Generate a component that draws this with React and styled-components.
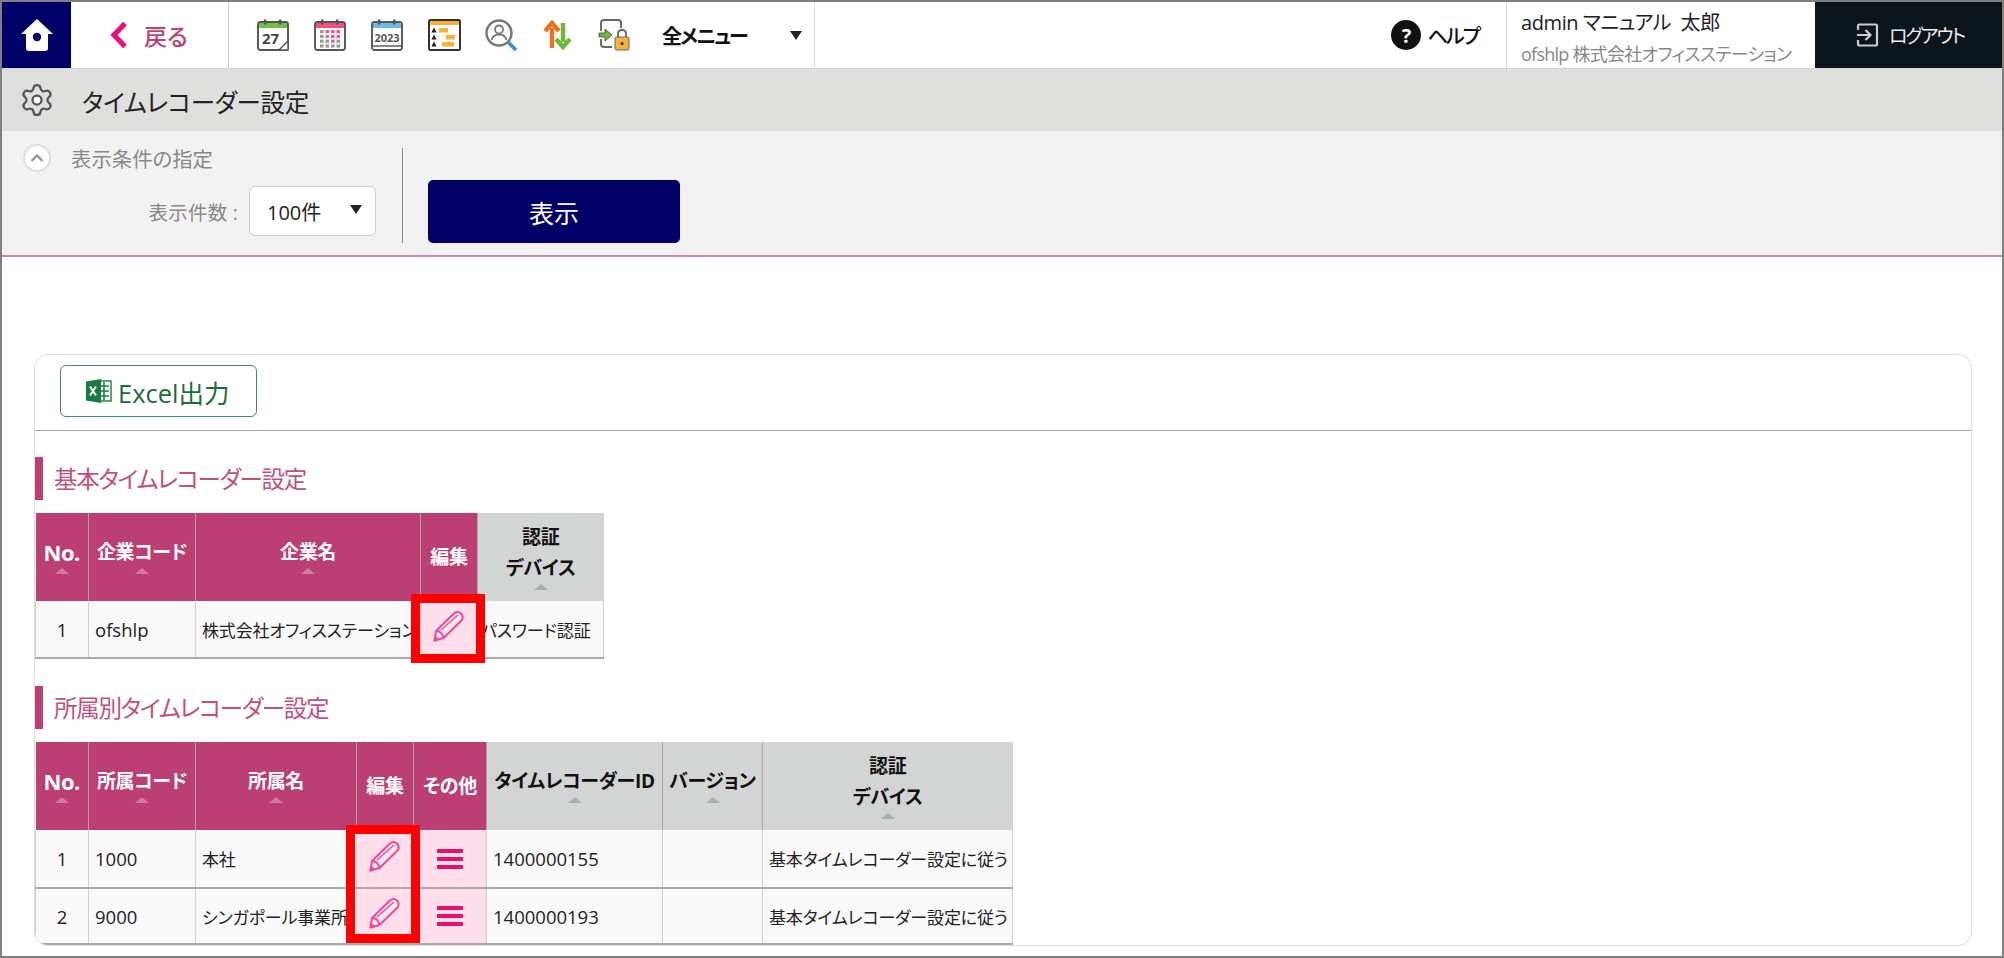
import styled, { createGlobalStyle } from 'styled-components';
import { Settings } from 'lucide-react';

const GlobalStyle = createGlobalStyle`
  html, body {
    margin: 0;
    padding: 0;
    background: #fff;
  }
  body {
    font-family: "Open Sans", "Noto Sans CJK JP", sans-serif;
    font-feature-settings: "palt";
    color: #222;
  }
`;

const Frame = styled.div`
  box-sizing: border-box;
  width: 2004px;
  height: 958px;
  border: 2px solid #808080;
  overflow: hidden;
  background: #fff;
`;

const Nav = styled.header`
  display: flex;
  align-items: stretch;
  height: 66px;
  background: #fff;
`;

const HomeButton = styled.a`
  display: flex;
  align-items: center;
  justify-content: center;
  width: 69px;
  background: #000066;
`;

const BackButton = styled.a`
  display: flex;
  align-items: center;
  gap: 15px;
  width: 158px;
  padding-left: 38px;
  box-sizing: border-box;
  border-right: 1px solid #cfcfcf;
  color: #c0406f;
  font-size: 23px;
  font-weight: 500;
`;

const IconMenu = styled.div`
  display: flex;
  align-items: center;
  gap: 24px;
  padding-left: 28px;
  width: 586px;
  box-sizing: border-box;
  border-right: 1px solid #dcdcdc;
`;

const MenuLabel = styled.span`
  margin-left: 8px;
  font-size: 20px;
  font-weight: 700;
  letter-spacing: -1.8px;
  color: #111;
  white-space: nowrap;
`;

const MenuArrow = styled.span`
  margin-left: 19px;
  width: 0;
  height: 0;
  border-left: 6px solid transparent;
  border-right: 6px solid transparent;
  border-top: 9px solid #222;
`;

const NavRight = styled.div`
  display: flex;
  align-items: stretch;
  margin-left: auto;
`;

const HelpLink = styled.a`
  display: flex;
  align-items: center;
  gap: 7px;
  padding-right: 27px;
  font-size: 20px;
  font-weight: 500;
  letter-spacing: -2px;
  color: #111;
`;

const HelpDot = styled.span`
  display: flex;
  align-items: center;
  justify-content: center;
  width: 30px;
  height: 30px;
  border-radius: 50%;
  background: #111;
  color: #fff;
  font-size: 20px;
  font-weight: 700;
`;

const UserBox = styled.div`
  display: flex;
  flex-direction: column;
  justify-content: space-between;
  width: 309px;
  padding: 8px 0 2px 14px;
  box-sizing: border-box;
  border-left: 1px solid #d8d8d8;
  white-space: nowrap;
`;

const UserName = styled.span`
  font-size: 20px;
  line-height: 26px;
  letter-spacing: -0.4px;
  color: #222;
`;

const UserCompany = styled.span`
  font-size: 18px;
  line-height: 24px;
  letter-spacing: -0.75px;
  color: #888;
`;

const LogoutButton = styled.a`
  display: flex;
  align-items: center;
  gap: 10px;
  width: 187px;
  padding-left: 41px;
  box-sizing: border-box;
  background: #0c141c;
  color: #eee;
  font-size: 19px;
  letter-spacing: -2px;
  white-space: nowrap;
`;

const TitleBar = styled.div`
  display: flex;
  align-items: center;
  gap: 27px;
  height: 63px;
  padding-left: 17px;
  background: #dfdfdd;
  border-top: 1px solid #d6d6d6;
  box-sizing: border-box;
  svg circle {
    fill: #fff;
  }
`;

const PageTitle = styled.h1`
  margin: 3px 0 0;
  font-size: 24.5px;
  font-weight: 400;
  letter-spacing: -0.3px;
  color: #222;
`;

const FilterBar = styled.section`
  display: flex;
  box-sizing: border-box;
  height: 126px;
  background: #f2f2f2;
  border-bottom: 2px solid #cf86a5;
`;

const FilterLeft = styled.div`
  display: flex;
  flex-direction: column;
  width: 400px;
  padding: 14px 0 0 21px;
  box-sizing: border-box;
`;

const CollapseHead = styled.div`
  display: flex;
  align-items: center;
  gap: 20px;
  height: 26px;
  font-size: 20.4px;
  color: #888;
`;

const CollapseButton = styled.span`
  display: flex;
  align-items: center;
  justify-content: center;
  width: 28px;
  height: 28px;
  box-sizing: border-box;
  border-radius: 50%;
  background: #fff;
  border: 2px solid #ddd;
`;

const CountRow = styled.div`
  display: flex;
  align-items: center;
  justify-content: flex-end;
  gap: 11px;
  margin-top: 15px;
  padding-right: 26px;
`;

const CountLabel = styled.span`
  font-size: 19.5px;
  letter-spacing: 0.2px;
  color: #888;
`;

const SelectBox = styled.div`
  display: flex;
  align-items: center;
  justify-content: space-between;
  width: 127px;
  height: 50px;
  box-sizing: border-box;
  padding: 0 13px 0 17px;
  background: #fff;
  border: 1px solid #ccc;
  border-radius: 6px;
  font-size: 20px;
  color: #222;
`;

const SelectArrow = styled.span`
  width: 0;
  height: 0;
  margin-bottom: 3px;
  border-left: 6px solid transparent;
  border-right: 6px solid transparent;
  border-top: 9px solid #222;
`;

const FilterRight = styled.div`
  display: flex;
  align-items: flex-end;
  height: 95px;
  margin-top: 17px;
  padding-left: 25px;
  border-left: 1px solid #888;
`;

const ShowButton = styled.button`
  width: 252px;
  height: 63px;
  border: 0;
  border-radius: 5px;
  background: #000066;
  color: #fff;
  font-family: inherit;
  font-feature-settings: inherit;
  font-size: 25px;
`;

const Card = styled.main`
  position: relative;
  box-sizing: border-box;
  height: 592px;
  margin: 97px 30px 0 32px;
  border: 1px solid #ddd;
  border-radius: 14px;
  overflow: hidden;
`;

const CardHead = styled.div`
  box-sizing: border-box;
  height: 76px;
  padding: 10px 0 0 25px;
  border-bottom: 1px solid #aaa;
`;

const ExcelButton = styled.button`
  display: inline-flex;
  align-items: center;
  gap: 6px;
  width: 197px;
  height: 52px;
  box-sizing: border-box;
  padding: 0 0 0 25px;
  background: #fff;
  border: 1.5px solid #3d8f63;
  border-radius: 6px;
  color: #1c6b3c;
  font-family: inherit;
  font-feature-settings: inherit;
  font-size: 25.5px;
`;

const SectionTitle = styled.h2`
  display: flex;
  align-items: center;
  box-sizing: border-box;
  height: 43px;
  margin: ${(p) => p.$top}px 0 ${(p) => p.$bottom}px;
  padding: 0 0 2px 11px;
  border-left: 8px solid #bb3f72;
  font-size: 23.5px;
  font-weight: 400;
  letter-spacing: -1.3px;
  color: #c0507c;
`;

const TableWrap = styled.div`
  position: relative;
  width: ${(p) => p.$width}px;
`;

const Table = styled.table`
  width: 100%;
  table-layout: fixed;
  border-collapse: collapse;
`;

const HeadCell = styled.th`
  box-sizing: border-box;
  width: ${(p) => p.$width}px;
  height: 88px;
  padding: 0;
  background: ${(p) => (p.$dark ? '#d3d5d5' : '#bb3f72')};
  color: ${(p) => (p.$dark ? '#111' : '#fff')};
  border-left: 1px solid #b0a3a8;
  font-size: 19px;
  font-weight: 700;
  line-height: 31px;
  vertical-align: middle;
  text-align: center;
  white-space: nowrap;
  &:first-child {
    border-left: 0;
  }
`;

const HeadLine = styled.div`
  font-size: ${(p) => (p.$large ? 22 : 19)}px;
  letter-spacing: ${(p) => (p.$large ? -0.5 : -0.3)}px;
`;

const SortMark = styled.span`
  display: block;
  width: 0;
  height: 0;
  margin: 0 auto 3px;
  border-left: 7px solid transparent;
  border-right: 7px solid transparent;
  border-bottom: 6px solid ${(p) => (p.$dark ? '#a9acb0' : '#d27b9f')};
`;

const Row = styled.tr`
  height: ${(p) => p.$height}px;
  border-bottom: 2px solid #aaa;
`;

const Cell = styled.td`
  box-sizing: border-box;
  padding: 0 ${(p) => (p.$tight ? 3 : 6)}px;
  background: #f9f9f9;
  border-left: 1px solid #d0d0d0;
  border-right: 1px solid #d0d0d0;
  font-size: ${(p) => (p.$latin ? 18.5 : 17)}px;
  letter-spacing: ${(p) => (p.$latin ? 0 : -0.15)}px;
  color: #222;
  text-align: ${(p) => (p.$center ? 'center' : 'left')};
  white-space: nowrap;
  overflow: hidden;
`;

const ActionCell = styled.td`
  box-sizing: border-box;
  padding: 0 0 ${(p) => p.$lift || 0}px;
  background: #fddfec;
  border-left: 1px solid #d0d0d0;
  text-align: center;
  line-height: 0;
`;

const Highlight = styled.div`
  position: absolute;
  left: ${(p) => p.$left}px;
  top: ${(p) => p.$top}px;
  width: ${(p) => p.$width}px;
  height: ${(p) => p.$height}px;
  box-sizing: border-box;
  border: 9px solid #ff0000;
  pointer-events: none;
`;

const HomeIcon = () => (
  <svg width="34" height="34" viewBox="0 0 34 34">
    <path d="M17 1 L33 16 L28 16 L28 30 Q28 33 25 33 L9 33 Q6 33 6 30 L6 16 L1 16 Z" fill="#fff" />
    <circle cx="17" cy="19" r="4.2" fill="#000066" />
  </svg>
);

const BackIcon = () => (
  <svg width="20" height="28" viewBox="0 0 20 28">
    <path d="M16 2.5 L5 14 L16 25.5" fill="none" stroke="#e6107a" strokeWidth="5.2" />
  </svg>
);

const CalendarBase = ({ band, children }) => (
  <svg width="33" height="32" viewBox="0 0 33 32">
    <rect x="1" y="3" width="30" height="28" rx="2.5" fill="#fff" stroke="#555" strokeWidth="1.9" />
    <path d={`M2 4 H30 V9 H2 Z`} fill={band} />
    <rect x="7" y="0.5" width="2.4" height="5" fill="#555" />
    <rect x="22" y="0.5" width="2.4" height="5" fill="#555" />
    {children}
  </svg>
);

const DayIcon = () => (
  <CalendarBase band="#6cc24a">
    <text x="5" y="25" fontSize="15" fontWeight="700" fontFamily="Open Sans" fill="#444">27</text>
    <path d="M22 31 L31 22 L31 31 Z" fill="#fff" stroke="#555" strokeWidth="1.4" />
  </CalendarBase>
);

const MonthIcon = () => {
  const dots = [];
  for (let r = 0; r < 4; r++) {
    for (let c = 0; c < 4; c++) {
      const pink = (r === 0 && c > 0) || (r === 1 && c > 1) || (r === 2 && c === 2);
      dots.push(<rect key={`${r}-${c}`} x={6 + c * 5.5} y={11 + r * 4.8} width="3.6" height="3.2" fill={pink ? '#ef5c83' : '#999'} />);
    }
  }
  return <CalendarBase band="#f0517c">{dots}</CalendarBase>;
};

const YearIcon = () => (
  <CalendarBase band="#6cb8e8">
    <text x="16" y="23" textAnchor="middle" fontSize="11" fontWeight="700" fontFamily="Open Sans" fill="#555">2023</text>
    <path d="M2 27 H30" stroke="#555" strokeWidth="1.4" />
  </CalendarBase>
);

const GanttIcon = () => (
  <svg width="33" height="32" viewBox="0 0 33 32">
    <rect x="1" y="1" width="31" height="30" rx="1.5" fill="#fff" stroke="#333" strokeWidth="2" />
    <rect x="2" y="2" width="29" height="4" fill="#f8b133" />
    <path d="M6 8.5 l2.6 5 h-5.2 Z M6 15.5 l2.6 5 h-5.2 Z M6 22.5 l2.6 5 h-5.2 Z" fill="#222" />
    <rect x="11" y="9" width="9" height="4.5" fill="#f8b133" />
    <rect x="18" y="16" width="9" height="4.5" fill="#f8b133" />
    <rect x="14" y="23" width="12" height="4.5" fill="#f8b133" />
  </svg>
);

const PersonSearchIcon = () => (
  <svg width="33" height="33" viewBox="0 0 33 33">
    <circle cx="14" cy="14" r="12.5" fill="#fff" stroke="#777" strokeWidth="2.4" />
    <circle cx="14" cy="10.5" r="4" fill="none" stroke="#777" strokeWidth="1.8" />
    <path d="M6.5 21 Q8 15.5 14 15.5 Q20 15.5 21.5 21" fill="none" stroke="#777" strokeWidth="1.8" />
    <path d="M23 23 L31 31" stroke="#4a90b8" strokeWidth="3.8" />
  </svg>
);

const SwapIcon = () => (
  <svg width="32" height="30" viewBox="0 0 32 30">
    <path d="M10 28 V8 M3 11 L10 3 L17 11" fill="none" stroke="#f07020" strokeWidth="4.4" />
    <path d="M21 3 V22 M14 19 L21 27 L28 19" fill="none" stroke="#6cb93a" strokeWidth="4.4" />
  </svg>
);

const LockIcon = () => (
  <svg width="32" height="32" viewBox="0 0 32 32">
    <path d="M3 12 V4 Q3 1 6 1 H20 Q23 1 23 4 V9 M3 20 V25 Q3 28 6 28 H14" fill="none" stroke="#666" strokeWidth="1.9" />
    <path d="M1 14 H7 V10 L14 16 L7 22 V18 H1 Z" fill="#6cb93a" stroke="#444" strokeWidth="0.8" />
    <path d="M20 19 V15 Q20 11 24 11 Q28 11 28 15 V19" fill="none" stroke="#666" strokeWidth="1.8" />
    <rect x="17" y="18" width="14" height="13" rx="1.5" fill="#f2b33d" stroke="#666" />
    <circle cx="24" cy="24.5" r="1.6" fill="#333" />
  </svg>
);

const LogoutIcon = () => (
  <svg width="23" height="24" viewBox="0 0 23 24" fill="none" stroke="#ccc" strokeWidth="2.2">
    <path d="M2 7 V3 Q2 1.5 3.5 1.5 H19.5 Q21 1.5 21 3 V21 Q21 22.5 19.5 22.5 H3.5 Q2 22.5 2 21 V17" />
    <path d="M1 12 H14 M9.5 7 L14.5 12 L9.5 17" />
  </svg>
);

const ExcelIcon = () => (
  <svg width="26" height="26" viewBox="0 0 26 26">
    <rect x="11" y="3" width="14" height="20" fill="#fff" stroke="#1c7a45" strokeWidth="1.4" />
    <path d="M14 8 H23 M14 13 H23 M14 18 H23 M18 4 V22" stroke="#1c7a45" strokeWidth="1.6" />
    <path d="M0 3.5 L15 1 V25 L0 22.5 Z" fill="#1c7a45" />
    <path d="M4 8.5 L10 17.5 M10 8.5 L4 17.5" stroke="#fff" strokeWidth="2" />
  </svg>
);

const PencilIcon = () => (
  <svg width="32" height="32" viewBox="0 0 32 32" fill="none" stroke="#f0479a" strokeWidth="2" strokeLinejoin="round">
    <path d="M3 21 L21 3.5 Q24.5 0.5 28 3.5 Q31 7 28.5 10.5 L10.5 28 L1.5 30.5 Z" fill="#fee9f2" />
    <path d="M3 21 Q9 21 10.5 28" />
    <path d="M8 20 L25 5" stroke="#f0479a" strokeWidth="1.4" />
    <path d="M2.2 27 L1.5 30.5 L5 29.6 Z" fill="#f0479a" />
  </svg>
);

const BarsIcon = () => (
  <svg width="26" height="24" viewBox="0 0 26 24" fill="#e8106f">
    <rect x="0" y="2" width="26" height="4" />
    <rect x="0" y="10" width="26" height="4" />
    <rect x="0" y="18" width="26" height="4" />
  </svg>
);

const Head = ({ width, dark, sort = true, large, lines }) => (
  <HeadCell $width={width} $dark={dark}>
    {lines.map((line) => (
      <HeadLine key={line} $large={large}>{line}</HeadLine>
    ))}
    {sort && <SortMark $dark={dark} />}
  </HeadCell>
);

const branches = [
  { no: 1, code: '1000', name: '本社', id: '1400000155', height: 58 },
  { no: 2, code: '9000', name: 'シンガポール事業所', id: '1400000193', height: 56 },
];

export default function App() {
  return (
    <>
      <GlobalStyle />
      <Frame>
        <Nav>
          <HomeButton>
            <HomeIcon />
          </HomeButton>
          <BackButton>
            <BackIcon />
            戻る
          </BackButton>
          <IconMenu>
            <DayIcon />
            <MonthIcon />
            <YearIcon />
            <GanttIcon />
            <PersonSearchIcon />
            <SwapIcon />
            <LockIcon />
            <MenuLabel>全メニュー</MenuLabel>
            <MenuArrow />
          </IconMenu>
          <NavRight>
            <HelpLink>
              <HelpDot>?</HelpDot>
              ヘルプ
            </HelpLink>
            <UserBox>
              <UserName>admin マニュアル&nbsp;&nbsp;太郎</UserName>
              <UserCompany>ofshlp 株式会社オフィスステーション</UserCompany>
            </UserBox>
            <LogoutButton>
              <LogoutIcon />
              ログアウト
            </LogoutButton>
          </NavRight>
        </Nav>
        <TitleBar>
          <Settings size={36} color="#555" strokeWidth={1.5} />
          <PageTitle>タイムレコーダー設定</PageTitle>
        </TitleBar>
        <FilterBar>
          <FilterLeft>
            <CollapseHead>
              <CollapseButton>
                <svg width="14" height="10" viewBox="0 0 14 10">
                  <path d="M1.5 8 L7 2.5 L12.5 8" fill="none" stroke="#999" strokeWidth="2.4" />
                </svg>
              </CollapseButton>
              表示条件の指定
            </CollapseHead>
            <CountRow>
              <CountLabel>表示件数 :</CountLabel>
              <SelectBox>
                100件
                <SelectArrow />
              </SelectBox>
            </CountRow>
          </FilterLeft>
          <FilterRight>
            <ShowButton>表示</ShowButton>
          </FilterRight>
        </FilterBar>
        <Card>
          <CardHead>
            <ExcelButton>
              <ExcelIcon />
              Excel出力
            </ExcelButton>
          </CardHead>
          <SectionTitle $top={26} $bottom={13}>基本タイムレコーダー設定</SectionTitle>
          <TableWrap $width={568}>
            <Table>
              <thead>
                <tr>
                  <Head width={53} large lines={['No.']} />
                  <Head width={107} lines={['企業コード']} />
                  <Head width={225} lines={['企業名']} />
                  <Head width={57} sort={false} lines={['編集']} />
                  <Head width={126} dark lines={['認証', 'デバイス']} />
                </tr>
              </thead>
              <tbody>
                <Row $height={57}>
                  <Cell $center $latin>1</Cell>
                  <Cell $latin>ofshlp</Cell>
                  <Cell>株式会社オフィスステーション</Cell>
                  <ActionCell $lift={6}>
                    <PencilIcon />
                  </ActionCell>
                  <Cell $tight>パスワード認証</Cell>
                </Row>
              </tbody>
            </Table>
            <Highlight $left={376} $top={81} $width={74} $height={69} />
          </TableWrap>
          <SectionTitle $top={27} $bottom={13}>所属別タイムレコーダー設定</SectionTitle>
          <TableWrap $width={977}>
            <Table>
              <thead>
                <tr>
                  <Head width={53} large lines={['No.']} />
                  <Head width={107} lines={['所属コード']} />
                  <Head width={161} lines={['所属名']} />
                  <Head width={57} sort={false} lines={['編集']} />
                  <Head width={73} sort={false} lines={['その他']} />
                  <Head width={176} dark lines={['タイムレコーダーID']} />
                  <Head width={100} dark lines={['バージョン']} />
                  <Head width={250} dark lines={['認証', 'デバイス']} />
                </tr>
              </thead>
              <tbody>
                {branches.map((b) => (
                  <Row key={b.no} $height={b.height}>
                    <Cell $center $latin>{b.no}</Cell>
                    <Cell $latin>{b.code}</Cell>
                    <Cell>{b.name}</Cell>
                    <ActionCell $lift={6}>
                      <PencilIcon />
                    </ActionCell>
                    <ActionCell>
                      <BarsIcon />
                    </ActionCell>
                    <Cell $latin>{b.id}</Cell>
                    <Cell />
                    <Cell>基本タイムレコーダー設定に従う</Cell>
                  </Row>
                ))}
              </tbody>
            </Table>
            <Highlight $left={311} $top={83} $width={74} $height={118} />
          </TableWrap>
        </Card>
      </Frame>
    </>
  );
}
